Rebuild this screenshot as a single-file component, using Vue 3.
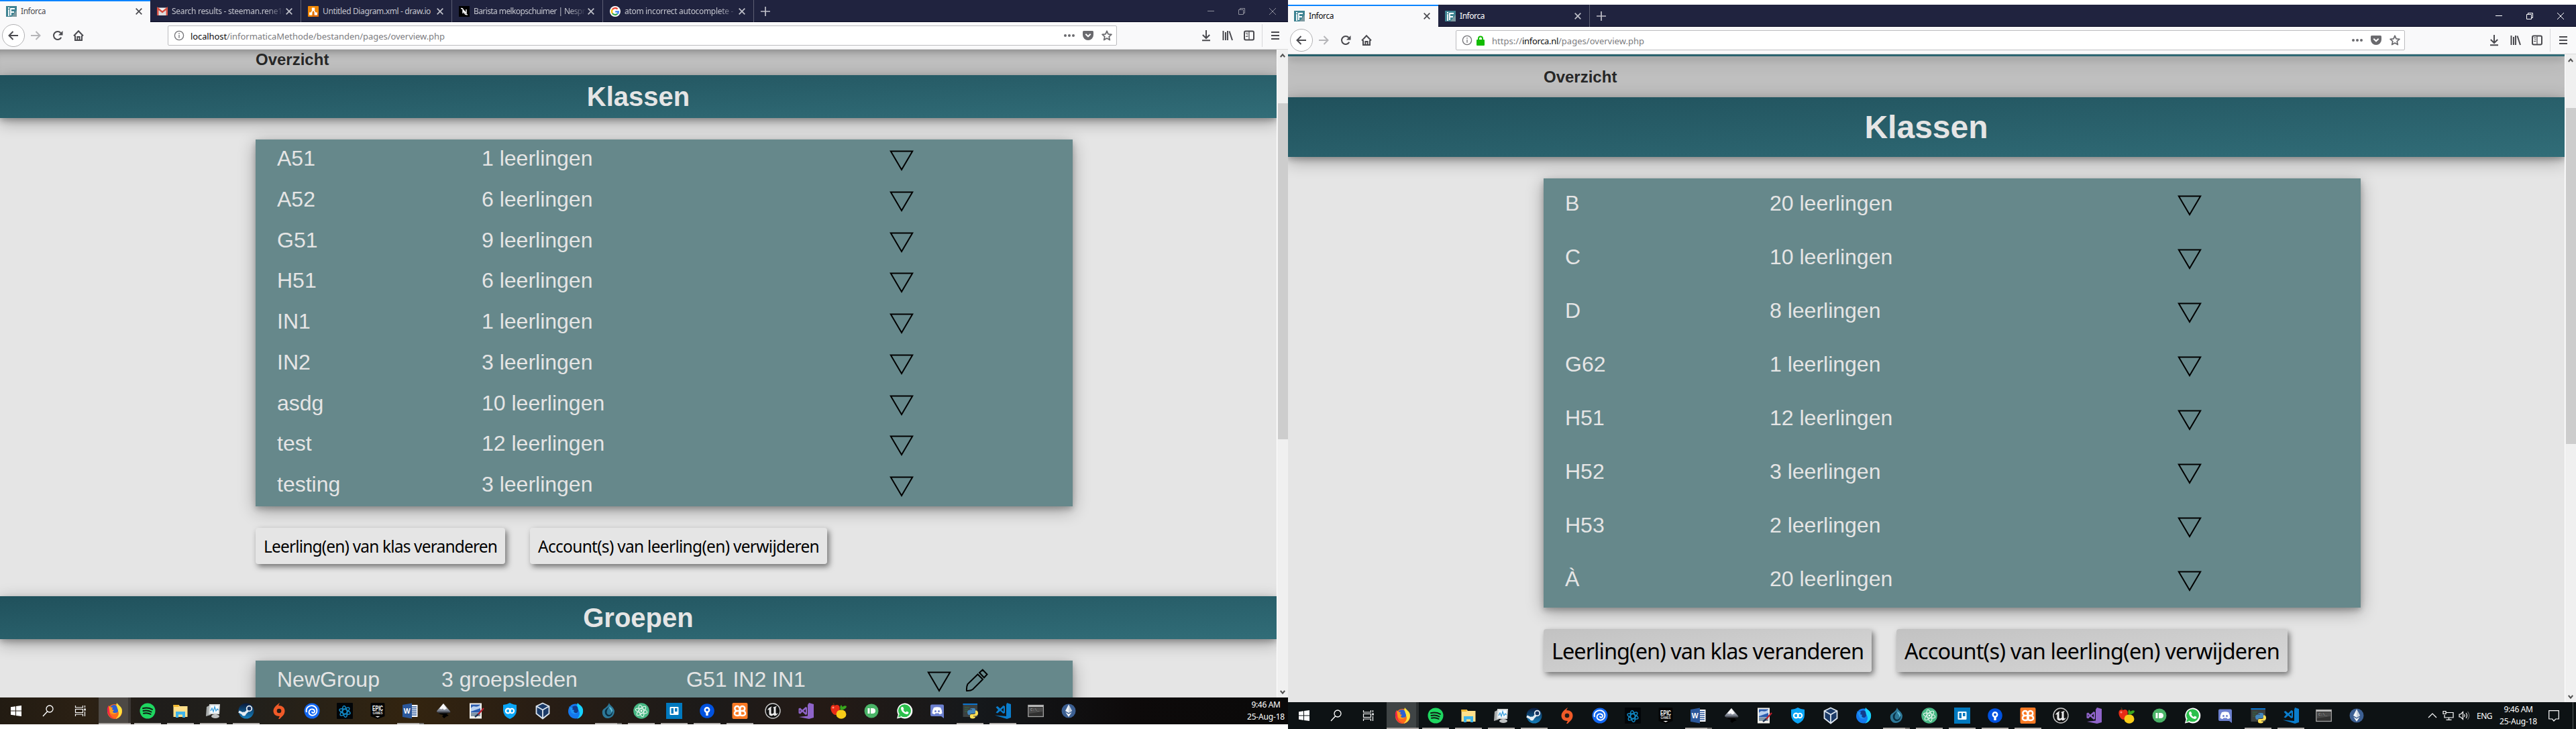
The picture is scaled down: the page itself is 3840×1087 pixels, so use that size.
<script setup>
// Spreads a label to a known pixel width through its letter spacing.
const vFit = {
  mounted(el, { value }) {
    if (!value) return
    const natural = el.getBoundingClientRect().width
    el.style.letterSpacing = (value - natural) / el.textContent.length + 'px'
  },
}

const brand = '<rect width="16" height="16" fill="#3f8392"/><path d="M8 16 16 6V16Z" fill="#7c99a0"/><path d="M3 3h2M4 5v10M7 14V4h6M7 9h5" stroke="#fff" stroke-width="1.8" fill="none"/>'
const gmail = '<rect y="2.500" width="16" height="11.500" rx="1" fill="#f1f1f1"/><path d="M3 4l5 5 5-5v10H3z" fill="#dcdcdc"/><path d="M1.300 14V3.500L8 9l6.700-5.500V14" fill="none" stroke="#d54b3d" stroke-width="2.400"/>'
const drawio = '<rect width="16" height="16" rx="1" fill="#f08705"/><path d="M9 5l7 7v4H6z" fill="#df6c0c"/><path d="M8 5 4.500 11M8 5l3.500 6" stroke="#fff" stroke-width="1.500"/><path d="M5.800 2.500h4.400v4H5.800zM2 9.500h4.400v4H2zM9.600 9.500H14v4H9.600z" fill="#fff"/>'
const nespresso = '<rect width="16" height="16" fill="#000"/><path d="M3 3.500c3 0 3 1 4.500 5S10 13 13 12.800M6 11V5l5 6V5" stroke="#fff" stroke-width="1.400" fill="none"/>'
const google = '<circle cx="8" cy="8" r="8" fill="#fff"/><g fill="none" stroke-width="2.300"><path d="M3.900 5.200A5 5 0 0 1 11.600 4.500" stroke="#ea4335"/><path d="M3.900 5.200a5 5 0 0 0 0 5.600" stroke="#fbbc05"/><path d="M3.900 10.800a5 5 0 0 0 7.500.900" stroke="#34a853"/><path d="M11.400 11.700A5 5 0 0 0 13 8.300H8.200" stroke="#4285f4"/></g>'

const apps = [
  { name: 'windows', svg: '<path d="M4 6.300 11 5.200V11.500H4zM12 5 20 4V11.500H12zM4 12.500h7v6.300L4 17.700zM12 12.500h8V20l-8-1.100z" fill="#fff"/>' },
  { name: 'search', svg: '<circle cx="14" cy="9" r="5" fill="none" stroke="#fff" stroke-width="1.300"/><path d="M10.500 13 4 20" stroke="#fff" stroke-width="1.400"/>' },
  { name: 'tasks', svg: '<path d="M4.500 4v3h11V4M4.500 20v-3h11v3M4.500 9.500h11v5h-11zM18.500 4v3M18.500 13v7" fill="none" stroke="#fff" stroke-width="1.200"/><path d="M17.300 8.500h2.500v3h-2.500z" fill="#fff"/>' },
  { name: 'firefox', active: true, svg: '<circle cx="12" cy="13" r="11" fill="#ff6a1c"/><path d="M15 0c2 3 6 5 7.500 9 1.500 7-2 13-9.500 15 5-4 6-8 4-12-1-3-4-5-2-12z" fill="#ffe23d"/><path d="M1 12c1 7 6 12 13 11.500-4 0-9-3-10-9L3 4C1 6 .500 9 1 12z" fill="#f0204b"/><path d="M5 7c3-5 8-5 10-2l2 6c0 4-3 6-6 5-4 0-4-3-3-4l-3-1z" fill="#2f5fd0"/><path d="M3 4c2 2 3 3 6 3l-1 3 3 1-2 2c0 2 4 3 7 1-2 4-9 4-11 0z" fill="#ff9a1f"/>' },
  { name: 'spotify', open: 1, svg: '<circle cx="12" cy="12" r="11.500" fill="#1ed760"/><path d="M5 8.300q7.500-2 14 1.500M5.500 12q6.500-1.700 12 1.500M6 15.700q5.500-1.500 10.500 1.200" stroke="#111a14" stroke-width="2" stroke-linecap="round" fill="none"/>' },
  { name: 'files', open: 1, svg: '<path d="M1.500 3h8l1.500 2h11.500v16h-21z" fill="#ffe08b"/><path d="M1.500 3h8v3h-8z" fill="#f1b92f"/><path d="M5 22V13h14v9h-4v-4.500H9V22z" fill="#3fb4ea"/>' },
  { name: 'monitor', open: 1, svg: '<path d="M2 6l6-3v15l-7 2z" fill="#a9adad"/><path d="M6 2h16l-1 15H5z" fill="#d6dada"/><path d="M8 4h12l-.700 11H7.300z" fill="#f5fbff"/><path d="M8 12l2-4 2 5 2-7 2 6 2-3 1.500 2" stroke="#3b9edb" fill="none" stroke-width="1.300"/><ellipse cx="15" cy="20" rx="6" ry="3" fill="#bfc2c2"/>' },
  { name: 'steam', open: 1, svg: '<defs><linearGradient id="st" x2="0" y2="1"><stop stop-color="#0a1a3c"/><stop offset="1" stop-color="#1580bd"/></linearGradient></defs><circle cx="12" cy="12" r="11.500" fill="url(#st)"/><path d="M1 13l8 4 8-8" stroke="#e6edf3" stroke-width="3.500" fill="none"/><circle cx="16.500" cy="8.500" r="3.800" fill="#16335f" stroke="#e6edf3" stroke-width="1.800"/><circle cx="8.500" cy="16.500" r="3" fill="#e6edf3"/>' },
  { name: 'origin', svg: '<path d="M13 0 11 4c6 0 9.500 3 9.500 8 0 6-4 8-7.500 12h-2l2-4c-6 0-9.500-3-9.500-8S8 3.500 13 0z" fill="#f05a28"/><circle cx="12" cy="12" r="3.300" fill="#231c17"/>' },
  { name: 'uplay', svg: '<circle cx="12" cy="12" r="11.500" fill="#1267f2"/><path d="M4 14C2 7 9 3 14 4.500c6 2 7 9 3 12.500-5 4-11 0-9-5 2-4 8-3 8 .500 0 3-4 3-4 .500" fill="none" stroke="#fff" stroke-width="1.900"/>' },
  { name: 'battlenet', svg: '<rect width="24" height="24" rx="1" fill="#020508"/><g fill="none" stroke="#1288c4" stroke-width="1.500"><ellipse cx="12" cy="13" rx="8.500" ry="3.300" transform="rotate(20 12 13)"/><ellipse cx="12" cy="13" rx="8.500" ry="3.300" transform="rotate(80 12 13)"/><ellipse cx="12" cy="13" rx="8.500" ry="3.300" transform="rotate(140 12 13)"/></g>' },
  { name: 'epic', svg: '<path d="M1.500 1.500Q1.500 0 3 0h18q1.500 0 1.500 1.500V20L12 24 1.500 20z" fill="#040404"/><text x="12" y="11.500" text-anchor="middle" font-family="Liberation Sans" font-size="11" font-weight="700" textLength="16" lengthAdjust="spacingAndGlyphs" fill="#fff">EPIC</text><text x="12" y="17" text-anchor="middle" font-family="Liberation Sans" font-size="4.500" font-weight="700" textLength="15" fill="#ddd">GAMES</text><path d="M8.500 20h7L12 21.800z" fill="#fff"/>' },
  { name: 'word', open: 2, svg: '<path d="M12 3h10.500v18H12z" fill="#fff"/><path d="M14 6h7M14 9h7M14 12h7M14 15h7M14 18h7" stroke="#2b579a" stroke-width="1.300"/><path d="M0 3 14 .500v23L0 21z" fill="#2b579a"/><text x="6.700" y="16" text-anchor="middle" font-family="Liberation Sans" font-size="10.500" font-weight="700" fill="#fff">W</text>' },
  { name: 'inkscape', svg: '<defs><linearGradient id="ik" x2="0" y2="1"><stop stop-color="#fff"/><stop offset=".500" stop-color="#777e8c"/><stop offset=".700" stop-color="#000"/></linearGradient></defs><path d="M12 1 22 12.500q1.500 3-3 3l-2 1.500 3 2-4 1.500L13 23l-3-3 2-2-5-1-4-3Q1 13 3 11z" fill="url(#ik)"/><path d="M11.500 1.800 6 8.500l3 1 2-1 2 2 4-2z" fill="#f8f8fa"/>' },
  { name: 'paint', svg: '<path d="M2 .500h18v23H2z" fill="#f4f2ec"/><path d="M4 2.500h14v12H4z" fill="#2a5caf"/><path d="M4 8c5-6 7 1 14-5v5L4 13z" fill="#b8d0ee"/><path d="M4 15h14v5H4z" fill="#8196a6"/><path d="M23 8 14 18" stroke="#ba1f2d" stroke-width="2.300"/><path d="M15 17l-5 4" stroke="#203354" stroke-width="2.500"/>' },
  { name: 'vpn', svg: '<path d="M12 0q5 3 10 3v8q0 9-10 13Q2 20 2 11V3q5 0 10-3z" fill="#0aa5f6"/><circle cx="9.300" cy="12" r="3.400" fill="none" stroke="#fff" stroke-width="2.200"/><circle cx="15" cy="12" r="3.200" fill="none" stroke="#fff" stroke-width="2"/>' },
  { name: 'virtualbox', svg: '<path d="M12 .500 21.500 5v11L12 23.500 2.500 16V5z" fill="#1c3b68"/><path d="M12 .500 21.500 5v11L12 23.500 2.500 16V5zM2.500 5 12 10.500 21.500 5M12 10.500v13" fill="none" stroke="#dde6ef" stroke-width="1.800"/>' },
  { name: 'firefoxdev', svg: '<circle cx="12" cy="12.500" r="11" fill="#1478ee"/><path d="M15 0c2 3 7 4 8 10 1 7-3 12-9 14 4-4 5-8 3-12-1-3-4-6-2-12z" fill="#16d2fc"/><path d="M6 7q5-5 9-1l1 6q-2 5-7 3-3-2-1-4l-3-1z" fill="#123b8c"/><path d="M2 5c2 2 3 2 6 2l-1 3 3 1-1 2q3 4 6 1-3 5-9 1z" fill="#1d93f5"/>' },
  { name: 'waterfox', open: 2, svg: '<path d="M13 0c1 4 7 6 8 12 0 7-5 11-10 11-6 0-9-5-8-11 1-4 7-4 10-12z" fill="#2d7898"/><path d="M13 6q-8 4-6 10 2 5 7 4 5-2 4-9-1 7-5 7-5-1-3-7 1-3 3-5z" fill="#0a2f43"/><path d="M14 9q3 2 2 6l2-3q-1-5-5-6z" fill="#63bfd9"/>' },
  { name: 'atom', open: 1, svg: '<circle cx="12" cy="12" r="11.800" fill="#48b985"/><g fill="none" stroke="#e8f7ee" stroke-width="1.100"><ellipse cx="12" cy="12" rx="9" ry="3.300" transform="rotate(75 12 12)"/><ellipse cx="12" cy="12" rx="9" ry="3.300" transform="rotate(15 12 12)"/><ellipse cx="12" cy="12" rx="9" ry="3.300" transform="rotate(135 12 12)"/></g><circle cx="12" cy="12" r="1.400" fill="#fff"/>' },
  { name: 'trello', open: 1, svg: '<path d="M0 0h24v24H0z" fill="#0079bf"/><rect x="5.500" y="6" width="13" height="12" rx="1" fill="#fff"/><path d="M7.500 8h3.500v8H7.500zM13 8h3.500v5H13z" fill="#0079bf"/>' },
  { name: 'sourcetree', open: 1, svg: '<circle cx="12" cy="12" r="10.800" fill="#0052e0"/><circle cx="12" cy="10.500" r="3.200" fill="none" stroke="#fff" stroke-width="2.500"/><path d="M10.300 13h3.400v6h-3.400z" fill="#fff"/>' },
  { name: 'xampp', open: 1, svg: '<rect x=".500" width="23" height="24" rx="2" fill="#fb7a24"/><path d="M9 12C3 12 3 5 8 5c4 0 3 4 4 7s2 7-4 7-5-7 1-7h6c6 0 5-7 1-7-5 0-3 4-4 7s-2 7 4 7 5-7-1-7" fill="none" stroke="#fff" stroke-width="2.500"/>' },
  { name: 'unreal', svg: '<circle cx="12" cy="12" r="11" fill="#101010" stroke="#c9c9c9" stroke-width="1.400"/><path d="M4 11Q6 6 11 5.500L9.500 7v8.500q1.500 2 4-.500V8L12 7l3.500-1.500L18 5l-1.500 2v8l1 1.500L20 15q-2 4-5.500 4.500L13 18l-2.500 1.500Q7 19 6.500 17V10z" fill="#e9e9e9"/>' },
  { name: 'visualstudio', svg: '<path d="M17 0 24 2v20l-7 2L2 21l13-1.500V3z" fill="#8f64c9"/><path d="M1.500 8.500 4 7.500l3 3 5-4.500 2 1v10l-2 1-5-4.500-3 3-2.500-1zM3.500 10.500v3L5 12zM9 12l3 2.500v-5z" fill="#8f64c9" fill-rule="evenodd"/>' },
  { name: 'fruit', svg: '<path d="M6 3C0 2-1 8 2 14q4 6 8 3c5-5 5-14 0-14Q8 3 7 4z" fill="#e82c16"/><path d="M6 4 4 0" stroke="#513216" stroke-width="1.400"/><ellipse cx="16" cy="17" rx="7.500" ry="6.800" fill="#f8cc18"/><path d="M15 10Q13 6 16 3l2 3q3-3 6-1 0 4-8 6z" fill="#39a51e"/><circle cx="4" cy="7" r="1.500" fill="#ff9281"/>' },
  { name: 'pushbullet', svg: '<circle cx="12" cy="12" r="10.500" fill="#4ab367"/><path d="M6.500 8h3v8h-3zM11 8h2.500q4.500 0 4.500 4t-4.500 4H11z" fill="#fff"/>' },
  { name: 'whatsapp', svg: '<path d="M1 23.500l1.700-6A11.500 11.500 0 1 1 7 22z" fill="#fff"/><circle cx="12.500" cy="11.700" r="9.500" fill="#2bc04c"/><path d="M3 21.500l1.200-4.500 3.500 3.300z" fill="#2bc04c"/><path d="M8 6l2 0 1.500 3.200-1 1.300q1.300 2.500 3.700 3.500l1.500-1.500 2.800 1.500Q18.500 17 15.500 17 8.500 15.500 7 9 7 7 8 6z" fill="#fff"/>' },
  { name: 'discord', svg: '<path d="M4 2.500h16q2 0 2 2V23l-4-3H4q-2 0-2-2V4.500q0-2 2-2z" fill="#6c80cf"/><path d="M7 7q5-1.500 10 0 2.500 4 2.500 8.500Q17 17 15.500 17l-1-1.500h-5l-1 1.500Q7 17 4.500 15.500 4.500 11 7 7z" fill="#fff"/><circle cx="9.500" cy="12.500" r="1.500" fill="#6c80cf"/><circle cx="14.500" cy="12.500" r="1.500" fill="#6c80cf"/>' },
  { name: 'python', open: 1, svg: '<path d="M1.500 1H23v20H1.500z" fill="#3b4040"/><path d="M1.500 1H23v2H1.500z" fill="#0a74cf"/><path d="M4 7h7M4 10h5M4 13h6" stroke="#376a43"/><path d="M14 8h4q2 0 2 2v4q0 2-2 2h-4q-2 0-2 2H10q-2-1-2-4t3-3.500h4v-1h-3Q12 8 14 8z" fill="#4285bb"/><path d="M20 11.500h1.500q2.500.500 2.500 4t-3 4h-4v1h3q0 3-4 3t-4-2.500v-2q0-2 2-2h4q2 0 2-2z" fill="#ffdf55"/>' },
  { name: 'vscode', open: 1, svg: '<path d="M18 0 24 2v20l-6 2L0 18.500l17 1.500V3z" fill="#0a7dcd"/><path d="M1.500 6.500 4 5l4 3.500L12.500 4 15 5v10l-2.500 1L8 12l-4 3.500-2.500-1L5 10.500zM9.500 10.500 13 13V7.500z" fill="#0a7dcd" fill-rule="evenodd"/>' },
  { name: 'cmd', svg: '<rect x=".800" y="3.500" width="22.500" height="17" fill="#303030" stroke="#a4a4a4" stroke-width="1.300"/><path d="M1 4h22v2H1z" fill="#c0c0c0"/><path d="M2 7h20v6L2 16z" fill="#494949"/><text x="4" y="12" font-family="Liberation Mono" font-size="5.500" fill="#aaa">C:\\_</text>' },
  { name: 'ethereum', svg: '<circle cx="12" cy="12" r="10.500" fill="#3c5f92"/><path d="M12 2.500 17 12l-5 3-5-3zM7.300 14l4.700 2.700 4.700-2.700L12 21z" fill="#f2f5f8"/><path d="M12 2.500 17 12l-5 3z" fill="#c7d1de"/>' },
]

const windows = [
  {
    side: 'left',
    tabs: [
      { title: 'Inforca', width: 224, fit: 37, icon: brand, active: true },
      { title: 'Search results - steeman.rene1(', width: 225, fit: 168, icon: gmail, fade: true },
      { title: 'Untitled Diagram.xml - draw.io', width: 225, fit: 161, icon: drawio },
      { title: 'Barista melkopschuimer | Nespr', width: 225, fit: 166, icon: nespresso, fade: true },
      { title: 'atom incorrect autocomplete -', width: 225, fit: 162, icon: google, fade: true },
    ],
    secure: false,
    url: [['localhost', true, 54], ['/informaticaMethode/bestanden/pages/overview.php', false, 325]],
    rows: [['A51', 1], ['A52', 6], ['G51', 9], ['H51', 6], ['IN1', 1], ['IN2', 3], ['asdg', 10], ['test', 12], ['testing', 3]],
    buttons: [['Leerling(en) van klas veranderen', 348], ['Account(s) van leerling(en) verwijderen', 419]],
    groups: [['NewGroup', '3 groepsleden', 'G51 IN2 IN1']],
  },
  {
    side: 'right',
    tabs: [
      { title: 'Inforca', width: 224, fit: 37, icon: brand, active: true },
      { title: 'Inforca', width: 226, fit: 37, icon: brand },
    ],
    secure: true,
    url: [['https://', false, 45], ['inforca.nl', true, 54], ['/pages/overview.php', false, 128]],
    rows: [['B', 20], ['C', 10], ['D', 8], ['G62', 1], ['H51', 12], ['H52', 3], ['H53', 2], ['À', 20]],
    buttons: [['Leerling(en) van klas veranderen', 465], ['Account(s) van leerling(en) verwijderen', 559]],
    groups: [],
  },
]
</script>

<template>
  <div class="desktop">
    <section v-for="w in windows" :key="w.side" class="screen" :class="w.side">
      <header class="tabs">
        <div v-for="(t, i) in w.tabs" :key="i" class="tab" :class="{ active: t.active }" :style="{ width: t.width + 'px' }">
          <svg class="favicon" viewBox="0 0 16 16" v-html="t.icon"></svg>
          <span class="title" :class="{ fade: t.fade }"><span v-fit="t.fit">{{ t.title }}</span></span>
          <svg class="close" viewBox="0 0 10 10"><path d="M.7.7l8.600 8.600M9.300.7.7 9.300" /></svg>
        </div>
        <svg class="plus" viewBox="0 0 14 14"><path d="M7 0v14M0 7h14" /></svg>
        <div class="controls">
          <svg viewBox="0 0 10 10"><path d="M0 4.500h10" /></svg>
          <svg viewBox="0 0 10 10"><path d="M.5 2.500h7v7h-7zM2.500 2.500v-2h7v7h-2" /></svg>
          <svg viewBox="0 0 10 10"><path d="M0 0l10 10M10 0 0 10" /></svg>
        </div>
      </header>

      <nav class="toolbar">
        <div class="nav-buttons">
          <span class="back"><svg viewBox="0 0 16 16"><path d="M15 8H1.500M7.500 2 1.500 8l6 6" /></svg></span>
          <svg class="forward" viewBox="0 0 16 16"><path d="M1 8h13.500M8.500 2l6 6-6 6" /></svg>
          <svg class="reload" viewBox="0 0 16 16"><path d="M13.300 10.800A6 6 0 1 1 12.500 4" /><path d="M15.500 1v6.500H9z" class="solid" /></svg>
          <svg class="home" viewBox="0 0 16 16"><path d="M1 8.500 8 1.300l7 7.200M3 8v7h10V8" /><path d="M6.300 15v-5h3.400v5" /></svg>
        </div>
        <div class="urlbar">
          <svg class="info" viewBox="0 0 16 16"><circle cx="8" cy="8" r="6.600" /><path d="M8 7v4.800M8 4v1.700" /></svg>
          <svg v-if="w.secure" class="lock" viewBox="0 0 12 15"><path d="M3 8V4.500a3 3 0 0 1 6 0V8" /><rect y="6" width="12" height="9" rx="1" /></svg>
          <span class="url"><span v-for="([text, strong, fit], i) in w.url" :key="i" v-fit="fit" :class="{ host: strong }">{{ text }}</span></span>
          <svg class="dots" viewBox="0 0 16 16"><circle cx="2" cy="8" r="2" /><circle cx="8" cy="8" r="2" /><circle cx="14" cy="8" r="2" /></svg>
          <svg class="pocket" viewBox="0 0 16 16"><path class="solid" d="M1.500 1h13Q16 1 16 2.500V7a8 8 0 0 1-16 0V2.500Q0 1 1.500 1z" /><path class="tick" d="M4.300 5.800 8 9.300l3.700-3.500" /></svg>
          <svg class="star" viewBox="0 0 16 16"><path d="M8 1.300l2 4.500 4.900.5-3.700 3.300 1.100 5L8 12l-4.300 2.600 1.100-5L1.100 6.300 6 5.800z" /></svg>
        </div>
        <div class="tools">
          <svg viewBox="0 0 16 16"><path d="M8 0v12M2.800 7 8 12l5.200-5M2 15.200h12" /></svg>
          <svg viewBox="0 0 16 16"><path d="M1.500 1v14M5 3v12M8 1v14M10.500 1.500 15 15" /></svg>
          <svg viewBox="0 0 16 16"><rect x="1" y="1.500" width="14" height="13" rx="2" /><path class="thin" d="M8 2v12M3 4.500h3.500M4 7h2.500M3 9.500h3.500" /></svg>
          <i></i>
          <svg class="menu" viewBox="0 0 12 14"><path d="M0 2h12M0 7h12M0 12h12" /></svg>
        </div>
      </nav>

      <div class="viewport">
        <main class="page">
          <div v-if="w.side === 'right'" class="strip"></div>
          <div class="crumb">Overzicht</div>
          <h1 class="band">Klassen</h1>
          <div class="panel classes">
            <div v-for="[name, count] in w.rows" :key="name" class="row">
              <span>{{ name }}</span><span>{{ count }} leerlingen</span>
              <svg class="tri" viewBox="0 0 36 31"><path d="M1.800 1.500h32.400L18 29z" /></svg>
            </div>
          </div>
          <div class="buttons">
            <button v-for="[label, fit] in w.buttons" :key="label"><span v-fit="fit">{{ label }}</span></button>
          </div>
          <template v-if="w.groups.length">
            <h1 class="band">Groepen</h1>
            <div class="panel groups">
              <div v-for="g in w.groups" :key="g[0]" class="row">
                <span v-for="cell in g" :key="cell">{{ cell }}</span>
                <svg class="tri" viewBox="0 0 36 31"><path d="M1.800 1.500h32.400L18 29z" /></svg>
                <svg class="pencil" viewBox="0 0 32 33"><path d="M17.500 7.500 2.500 22Q.5 26 1 32q6 .3 9-2L25 15zM20 5l4.800-4.300 6.700 6.800L27 12.500z" /></svg>
              </div>
            </div>
          </template>
        </main>
        <aside class="scrollbar">
          <svg viewBox="0 0 8 6"><path d="M.8 5 4 1.300 7.200 5" /></svg>
          <div class="thumb"></div>
          <svg viewBox="0 0 8 6"><path d="M.8 1 4 4.700 7.200 1" /></svg>
        </aside>
      </div>

      <footer class="taskbar">
        <div v-for="a in apps" :key="a.name" class="app" :class="[a.name, { active: a.active, open: a.open, split: a.open === 2 }]">
          <svg viewBox="0 0 24 24" v-html="a.svg"></svg>
        </div>
        <div class="tray">
          <template v-if="w.side === 'right'">
            <svg class="chevron" viewBox="0 0 14 8"><path d="M1 7l6-6 6 6" /></svg>
            <svg class="network" viewBox="0 0 16 14"><path d="M4 2.500h11.500v7.500H2.500V6M9 10v3M5 13.300h8M.5.5h4v4h-4z" /></svg>
            <svg class="sound" viewBox="0 0 16 14"><path d="M.5 5v4h2l3.500 3.500v-11L2.500 5z" /><path d="M8 5q1.500 2 0 4M10.500 3q3 4 0 8" /><path d="M13 1q4.500 6 0 12" opacity=".4" /></svg>
            <span class="lang" v-fit="23">ENG</span>
          </template>
          <div class="clock"><span v-fit="43">9:46 AM</span><span v-fit="56">25-Aug-18</span></div>
          <svg v-if="w.side === 'right'" class="note" viewBox="0 0 16 17"><path d="M.7.700h14.600v12.300h-4.500L8 16l-2.500-3H.7z" /></svg>
          <i v-if="w.side === 'right'"></i>
        </div>
      </footer>
    </section>
  </div>
</template>

<style>
body { margin: 0; background: #fff; }
</style>

<style scoped>
.desktop { display: flex; width: 3840px; height: 1087px; background: #fff; overflow: hidden; font-family: "Noto Sans", "Open Sans", sans-serif; }
.screen { width: 1920px; height: 1080px; display: flex; flex-direction: column; }
.right { margin-top: 7px; }
svg { display: block; flex: none; overflow: visible; }

.tabs { height: 33px; flex: none; display: flex; align-items: center; background: #20233f; box-shadow: inset 0 -1px #0c0d24; }
.tab { height: 33px; flex: none; box-sizing: border-box; display: flex; align-items: center; padding: 1px 12px 0 10px; border-right: 1px solid #5d5f73; color: #c3c4cd; font-size: 12px; }
.tab.active { background: #f9f9fa; border-right: 0; border-top: 2px solid #0a84ff; padding: 0 12px 1px 9px; color: #4c4c50; }
.right .tab { color: #fff; }
.right .tab.active { color: #0c0c0d; }
.favicon { width: 16px; height: 16px; margin-right: 6px; }
.title { flex: 1; min-width: 0; white-space: nowrap; line-height: 16px; }
.title span { display: inline-block; }
.fade { -webkit-mask-image: linear-gradient(90deg, #000 142px, transparent 168px); mask-image: linear-gradient(90deg, #000 142px, transparent 168px); }
.close { width: 10px; height: 10px; stroke: #bfc0c9; stroke-width: 1.7; }
.active .close { stroke: #4a4a4f; }
.plus { width: 14px; height: 14px; margin-left: 10px; stroke: #c0c0c9; stroke-width: 1.7; }
.controls { margin-left: auto; display: flex; gap: 36px; padding-right: 18px; }
.controls svg { width: 10px; height: 10px; fill: none; stroke: #8e8f9c; stroke-width: 1; }
.right .controls svg { stroke: #fff; }

.toolbar { height: 40px; flex: none; border-bottom: 1px solid #dadadb; background: #f9f9fa; display: flex; align-items: center; }
.nav-buttons { width: 250px; flex: none; display: flex; align-items: center; box-sizing: border-box; padding-left: 3px; }
.nav-buttons svg { width: 16px; height: 16px; fill: none; stroke: #4a4a4f; stroke-width: 2; }
.back { width: 32px; height: 32px; border: 1px solid #b1b1b3; border-radius: 50%; background: #fff; display: flex; align-items: center; justify-content: center; margin-right: 8px; }
.nav-buttons .forward { margin-right: 17px; stroke: #b5b5b8; }
.nav-buttons .reload { margin-right: 15px; }
.nav-buttons .reload .solid { fill: #4a4a4f; stroke: none; }
.urlbar { box-sizing: border-box; width: 1415px; height: 30px; border: 1px solid #bcbcbf; border-radius: 2px; background: #fff; display: flex; align-items: center; padding: 0 6px 0 8px; }
.info { width: 16px; height: 16px; fill: none; stroke: #737377; stroke-width: 1.3; margin-right: 9px; }
.right .info { margin-right: 6px; }
.lock { width: 12px; height: 15px; margin-right: 11px; fill: #12bc00; }
.lock path { fill: none; stroke: #12bc00; stroke-width: 2; }
.url { flex: 1; font-size: 13px; line-height: 18px; color: #7c7c80; white-space: nowrap; padding-top: 2px; display: flex; }
.host { color: #0c0c0d; }
.dots, .pocket, .star { width: 16px; height: 16px; fill: #6a6a6e; }
.dots { margin-right: 12px; }
.pocket { margin-right: 12px; }
.tick { fill: none; stroke: #fff; stroke-width: 2; }
.star path { fill: none; stroke: #6a6a6e; stroke-width: 1.8; stroke-linejoin: round; }
.tools { margin-left: 125px; display: flex; align-items: center; }
.tools svg { width: 16px; height: 16px; margin-right: 16px; fill: none; stroke: #4a4a4f; stroke-width: 2; }
.tools svg:nth-child(3) { margin-right: 11px; }
.tools .thin { stroke-width: 1.2; }
.tools i { width: 1px; height: 34px; background: #d7d7db; margin-right: 13px; }
.tools .menu { width: 12px; height: 14px; margin: 0; }

.viewport { height: 966px; flex: none; display: flex; overflow: hidden; }
.page { width: 1903px; height: 966px; flex: none; overflow: hidden; background: #e5e5e5; display: flex; flex-direction: column; font-family: "Liberation Sans", Arial, sans-serif; isolation: isolate; }
.page > * { flex: none; }
.strip { height: 3px; background: linear-gradient(90deg, #265f6a, #306b77); position: relative; z-index: 1; box-shadow: 0 4px 8px rgba(0, 0, 0, .25), 0 6px 24px rgba(0, 0, 0, .32); }
.crumb { box-sizing: border-box; height: 38px; padding: 1px 0 0 381px; background: #bfbfbf; font-size: 24px; line-height: 28px; font-weight: 700; color: #272727; box-shadow: inset 0 14px 14px -12px rgba(0, 0, 0, .35); }
.right .crumb { height: 61px; padding-top: 17px; box-shadow: none; }
.band { position: relative; height: 64px; margin: 0; background: linear-gradient(to bottom right, #20515c, #316d78); color: #e5e5e5; font-size: 40px; line-height: 64px; font-weight: 700; text-align: center; box-shadow: 0 4px 8px rgba(0, 0, 0, .22), 0 6px 24px rgba(0, 0, 0, .32); }
.right .band { height: 89px; line-height: 89px; font-size: 48px; }
.panel { position: relative; margin: 32px 304px 0 381px; background: #66888b; box-shadow: 0 4px 8px rgba(0, 0, 0, .22), 0 6px 24px rgba(0, 0, 0, .32); display: flex; flex-direction: column; }
.classes { height: 547px; }
.right .classes { height: 640px; }
.row { flex: 1; box-sizing: border-box; padding: 9px 32px 0; display: grid; grid-template-columns: 305px 608px 1fr; align-items: start; color: #e5e5e5; font-size: 32px; line-height: 38px; }
.right .row { padding-top: 18px; }
.tri { width: 36px; height: 31px; margin-top: 7px; fill: none; stroke: #000; stroke-width: 2; }
.buttons { display: flex; gap: 37px; margin: 32px 0 48px 381px; }
button { height: 54px; padding: 0 12px; border: 0; border-radius: 4px; background: #e5e5e5; color: #000; font: 24.5px/56px "Noto Sans", "Open Sans", sans-serif; white-space: nowrap; box-shadow: 3px 4px 8px rgba(0, 0, 0, .5); }
button span { display: inline-block; }
.right button { height: 64px; line-height: 66px; font-size: 32.5px; background: linear-gradient(172deg, #c2c2c2, #d8d8d8); }
.groups { height: 100px; }
.groups .row { grid-template-columns: 245px 365px 359px 58px 1fr; }
.pencil { width: 32px; height: 33px; margin-top: 4px; fill: none; stroke: #000; stroke-width: 2; }
.scrollbar { width: 17px; box-sizing: border-box; border-left: 1px solid #fff; background: #f0f0f0; display: flex; flex-direction: column; align-items: center; padding: 6px 0 5px; }
.scrollbar svg { width: 8px; height: 6px; fill: none; stroke: #505050; stroke-width: 2; }
.thumb { width: 15px; height: 501px; background: #cdcdcd; margin: 68px 0 auto; }

.taskbar { height: 40px; flex: none; display: flex; background: linear-gradient(90deg, #221b12, #2c2114 7%, #1f1d1b 12%, #22201b 20%, #33240f 32%, #281d14 42%, #1c1a19 55%, #241a15 64%, #15181b 76%, #0d0a0a 88%, #0a0909); }
.right .taskbar { background: #0d1214; }
.app { width: 40px; height: 40px; margin-right: 9.050px; flex: none; display: flex; align-items: center; justify-content: center; box-sizing: border-box; }
.app svg { width: 24px; height: 24px; }
.app.windows { width: 48px; margin: 0; }
.app.search, .app.tasks { width: 48px; margin: 0; }
.app.tasks { margin-right: 3px; }
.app.active { width: 48px; margin-right: 5px; background: linear-gradient(90deg, #4d4945 44px, #3c3835 44px); border-bottom: 2px solid #aaa5a2; padding-top: 2px; }
.right .app.active { background: linear-gradient(90deg, #3f4445 44px, #2b2f30 44px); }
.app.open { border-bottom: 2px solid #b3afac; padding-top: 2px; }
.app.split { border-image: linear-gradient(90deg, #b3afac 32px, #777471 32px) 2; }
.tray { margin-left: auto; display: flex; align-items: center; color: #fff; font-size: 12px; }
.tray svg { fill: none; stroke: #fff; stroke-width: 1.2; }
.chevron { width: 14px; height: 8px; margin-right: 8px; }
.network { width: 17px; height: 14px; margin-right: 7px; }
.sound { width: 17px; height: 14px; margin-right: 10px; }
.lang { margin-right: 11px; }
.clock { width: 56px; display: flex; flex-direction: column; align-items: center; line-height: 18px; margin-right: 5px; white-space: nowrap; }
.right .clock { margin-right: 17px; }
.note { width: 16px; height: 17px; margin-right: 20px; }
.tray i { width: 1px; height: 40px; background: #55595a; margin-right: 4px; }
</style>
